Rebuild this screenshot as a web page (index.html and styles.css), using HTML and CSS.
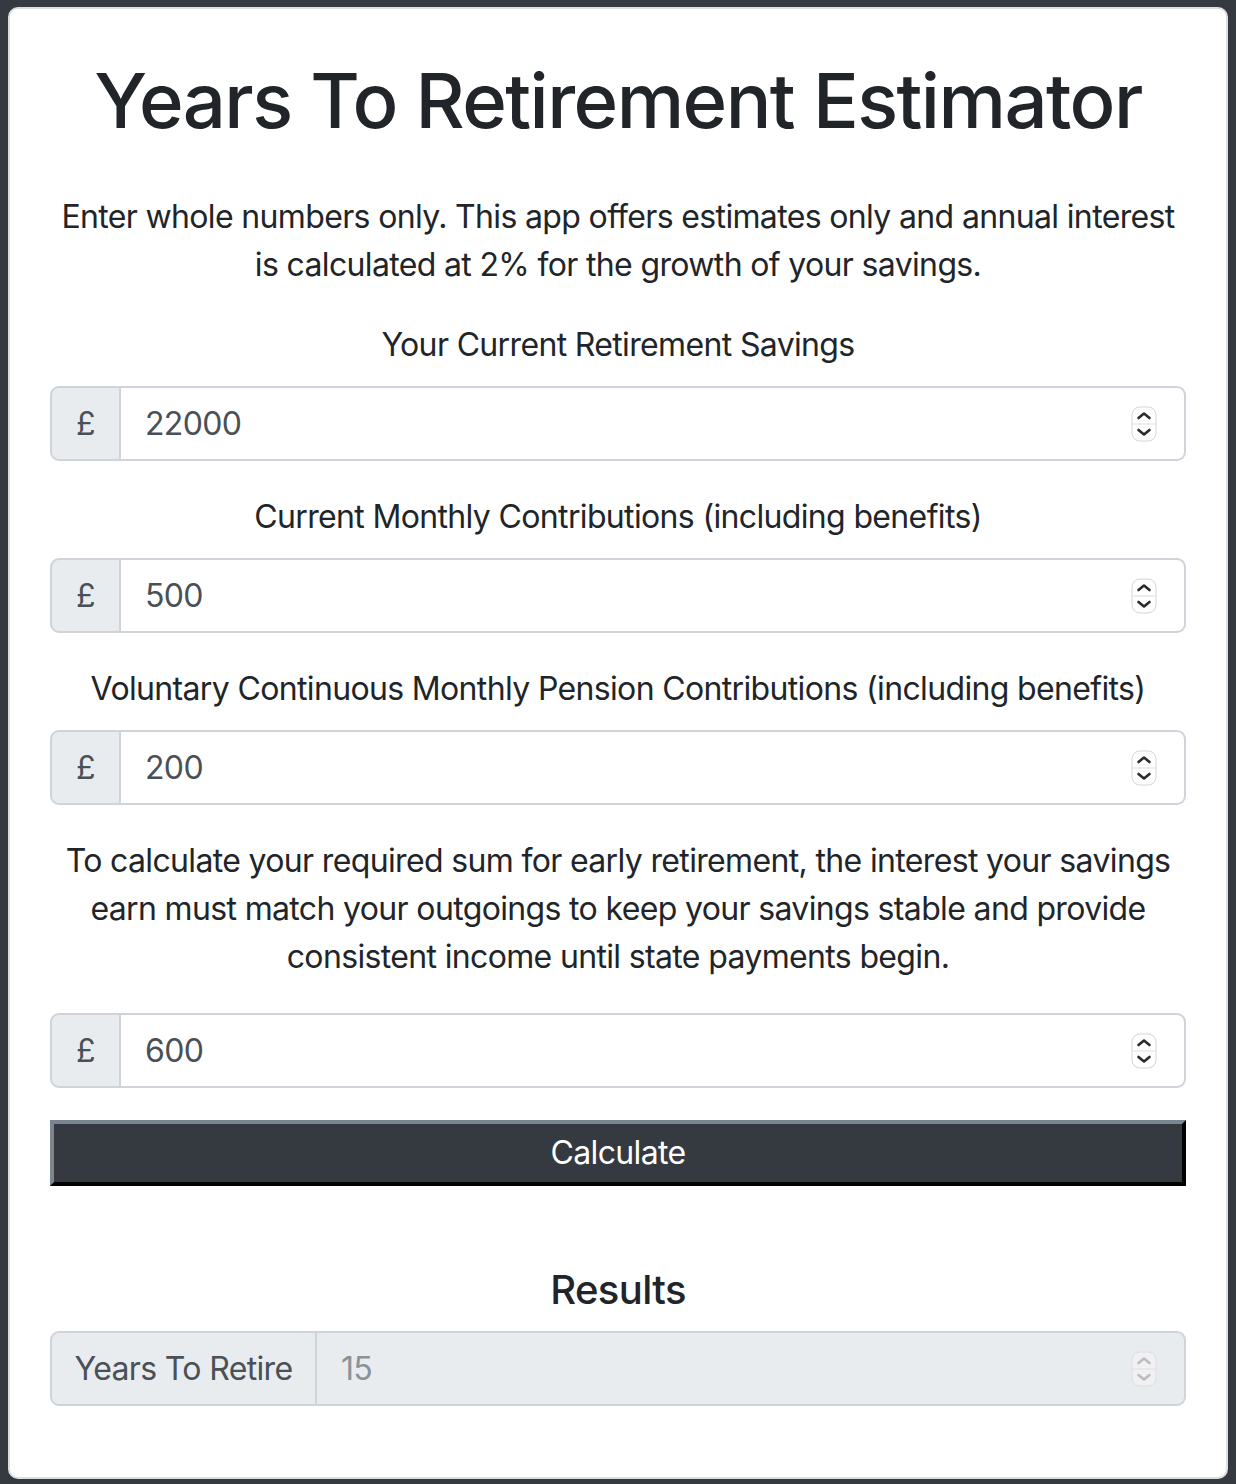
FILE: index.html
```html
<!DOCTYPE html>
<html lang="en">
<head>
<meta charset="utf-8">
<title>Years To Retirement Estimator</title>
<link rel="stylesheet" href="styles.css">
</head>
<body>
<div class="page">
  <main class="card">
    <h1 class="title">Years To Retirement Estimator</h1>
    <p class="text">Enter whole numbers only. This app offers estimates only and annual interest is calculated at 2% for the growth of your savings.</p>

    <label class="field-label" for="savings">Your Current Retirement Savings</label>
    <div class="input-group">
      <span class="prefix">£</span>
      <div class="field">
        <input class="field-input" id="savings" type="text" value="22000">
        <svg class="spin" viewBox="0 0 26 36" width="26" height="36" aria-hidden="true"><rect x="1" y="1" width="24" height="34" rx="8" fill="#fff" stroke="#d4d4d6"/><line x1="1.5" y1="18" x2="24.5" y2="18" stroke="#dcdcde"/><path d="M7.5 12 L13 7.5 L18.5 12" fill="none" stroke="#2b2b2b" stroke-width="2.6" stroke-linecap="round" stroke-linejoin="round"/><path d="M7.5 24 L13 28.5 L18.5 24" fill="none" stroke="#2b2b2b" stroke-width="2.6" stroke-linecap="round" stroke-linejoin="round"/></svg>
      </div>
    </div>

    <label class="field-label" for="monthly">Current Monthly Contributions (including benefits)</label>
    <div class="input-group">
      <span class="prefix">£</span>
      <div class="field">
        <input class="field-input" id="monthly" type="text" value="500">
        <svg class="spin" viewBox="0 0 26 36" width="26" height="36" aria-hidden="true"><rect x="1" y="1" width="24" height="34" rx="8" fill="#fff" stroke="#d4d4d6"/><line x1="1.5" y1="18" x2="24.5" y2="18" stroke="#dcdcde"/><path d="M7.5 12 L13 7.5 L18.5 12" fill="none" stroke="#2b2b2b" stroke-width="2.6" stroke-linecap="round" stroke-linejoin="round"/><path d="M7.5 24 L13 28.5 L18.5 24" fill="none" stroke="#2b2b2b" stroke-width="2.6" stroke-linecap="round" stroke-linejoin="round"/></svg>
      </div>
    </div>

    <label class="field-label" for="voluntary">Voluntary Continuous Monthly Pension Contributions (including benefits)</label>
    <div class="input-group">
      <span class="prefix">£</span>
      <div class="field">
        <input class="field-input" id="voluntary" type="text" value="200">
        <svg class="spin" viewBox="0 0 26 36" width="26" height="36" aria-hidden="true"><rect x="1" y="1" width="24" height="34" rx="8" fill="#fff" stroke="#d4d4d6"/><line x1="1.5" y1="18" x2="24.5" y2="18" stroke="#dcdcde"/><path d="M7.5 12 L13 7.5 L18.5 12" fill="none" stroke="#2b2b2b" stroke-width="2.6" stroke-linecap="round" stroke-linejoin="round"/><path d="M7.5 24 L13 28.5 L18.5 24" fill="none" stroke="#2b2b2b" stroke-width="2.6" stroke-linecap="round" stroke-linejoin="round"/></svg>
      </div>
    </div>

    <p class="text">To calculate your required sum for early retirement, the interest your savings earn must match your outgoings to keep your savings stable and provide consistent income until state payments begin.</p>
    <div class="input-group">
      <span class="prefix">£</span>
      <div class="field">
        <input class="field-input" id="outgoings" type="text" value="600" aria-label="Monthly outgoings">
        <svg class="spin" viewBox="0 0 26 36" width="26" height="36" aria-hidden="true"><rect x="1" y="1" width="24" height="34" rx="8" fill="#fff" stroke="#d4d4d6"/><line x1="1.5" y1="18" x2="24.5" y2="18" stroke="#dcdcde"/><path d="M7.5 12 L13 7.5 L18.5 12" fill="none" stroke="#2b2b2b" stroke-width="2.6" stroke-linecap="round" stroke-linejoin="round"/><path d="M7.5 24 L13 28.5 L18.5 24" fill="none" stroke="#2b2b2b" stroke-width="2.6" stroke-linecap="round" stroke-linejoin="round"/></svg>
      </div>
    </div>

    <button class="calc-btn" type="button">Calculate</button>

    <h2 class="results-title">Results</h2>
    <div class="input-group">
      <span class="prefix prefix-wide">Years To Retire</span>
      <div class="field field-disabled">
        <input class="field-input" type="text" value="15" disabled aria-label="Years To Retire">
        <svg class="spin" viewBox="0 0 26 36" width="26" height="36" aria-hidden="true"><rect x="1" y="1" width="24" height="34" rx="8" fill="#f1f1f3" stroke="#dedee1"/><line x1="1.5" y1="18" x2="24.5" y2="18" stroke="#dedee1"/><path d="M7.5 12 L13 7.5 L18.5 12" fill="none" stroke="#bdbdc0" stroke-width="2.6" stroke-linecap="round" stroke-linejoin="round"/><path d="M7.5 24 L13 28.5 L18.5 24" fill="none" stroke="#bdbdc0" stroke-width="2.6" stroke-linecap="round" stroke-linejoin="round"/></svg>
      </div>
    </div>
  </main>
</div>
</body>
</html>
```

FILE: styles.css
```css
* { box-sizing: border-box; }

html, body {
  margin: 0;
  padding: 0;
  background: #343a40;
}

body {
  font-family: Inter, "Noto Sans", "Liberation Sans", sans-serif;
  color: #212529;
  font-size: 32px;
  line-height: 48px;
  letter-spacing: -0.65px;
}

.page {
  padding: 7px 8px 5px 8px;
}

.card {
  background: #fff;
  border: 2px solid #dcdfe2;
  border-radius: 10px;
  padding: 41px 40px 71px 40px;
  display: flex;
  flex-direction: column;
}

.title {
  margin: 0 0 43px 0;
  text-align: center;
  font-size: 76px;
  font-weight: 500;
  line-height: 100px;
  letter-spacing: -1.55px;
}

.text {
  margin: 0 0 32px 0;
  text-align: center;
}

.field-label {
  display: block;
  text-align: center;
  margin-bottom: 17px;
}

.input-group {
  display: flex;
  height: 75px;
  margin-bottom: 32px;
}

.prefix {
  display: flex;
  align-items: center;
  justify-content: center;
  width: 71px;
  background: #e9ecef;
  border: 2px solid #ced4da;
  border-radius: 9px 0 0 9px;
  color: #495057;
}

.prefix-wide {
  width: 267px;
}

.field {
  flex: 1;
  display: flex;
  align-items: center;
  border: 2px solid #ced4da;
  border-left: none;
  border-radius: 0 9px 9px 0;
  background: #fff;
  padding: 0 27px 0 24px;
}

.field-disabled {
  background: #e9ecef;
}

.field-input {
  flex: 1;
  min-width: 0;
  border: none;
  outline: none;
  background: transparent;
  font: inherit;
  letter-spacing: inherit;
  color: #495057;
  padding: 0;
}

.field-disabled .field-input {
  color: #8a9299;
}

.spin {
  flex: none;
  display: block;
}

.calc-btn {
  height: 66px;
  margin: 0 0 80px 0;
  padding: 0;
  background: #343a40;
  color: #fff;
  font: inherit;
  letter-spacing: inherit;
  border-style: solid;
  border-width: 4px;
  border-color: #7a8791 #000 #000 #7a8791;
}

.results-title {
  margin: 0 0 17px 0;
  text-align: center;
  font-size: 40px;
  line-height: 48px;
  font-weight: 500;
  letter-spacing: -0.6px;
}

.results-title + .input-group {
  margin-bottom: 0;
}
```
